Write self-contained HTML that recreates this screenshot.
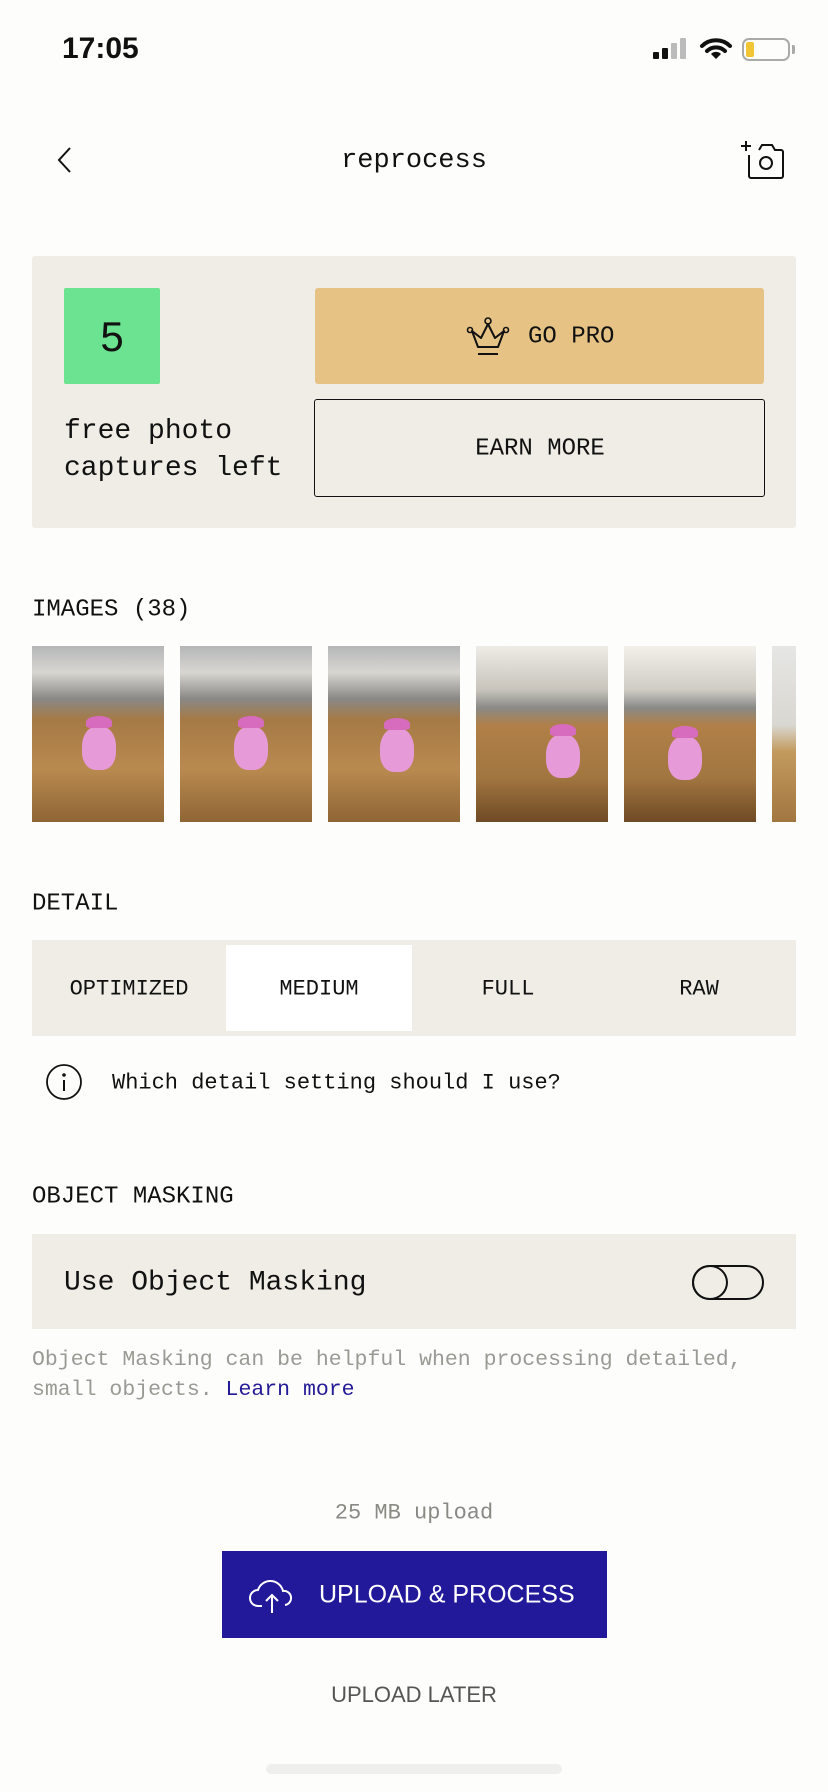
<!DOCTYPE html>
<html><head><meta charset="utf-8"><style>
*{margin:0;padding:0;box-sizing:border-box}
body{width:828px;height:1792px;background:#fdfdfb;position:relative;overflow:hidden;font-family:"Liberation Mono",monospace;color:#111}
.a{position:absolute}
.mono{font-family:"Liberation Mono",monospace}
.sans{font-family:"Liberation Sans",sans-serif}
.c{transform:translate(-50%,-50%);white-space:nowrap}
.l{transform:translateY(-50%);white-space:nowrap}
.thumb{position:absolute;top:646px;width:132px;height:176px;overflow:hidden;background:linear-gradient(180deg,#b5b6b8 0%,#d8d6d0 15%,#8a8886 30%,#a67a45 42%,#b98a50 70%,#8f6535 100%)}
.thumb .fig{position:absolute;width:34px;height:44px;background:#e79ad8;border-radius:45% 45% 40% 40%}
.thumb .hat{position:absolute;width:26px;height:12px;background:#d76bbd;border-radius:50% 50% 20% 20%}
</style></head><body>
<div class="a sans l" style="left:62px;top:49px;font-size:30px;font-weight:bold">17:05</div>
<div class="a" style="left:653px;top:52px;width:6px;height:7px;background:#111;border-radius:1px"></div>
<div class="a" style="left:662px;top:48px;width:6px;height:11px;background:#111;border-radius:1px"></div>
<div class="a" style="left:671px;top:43px;width:6px;height:16px;background:#bbb;border-radius:1px"></div>
<div class="a" style="left:680px;top:38px;width:6px;height:21px;background:#bbb;border-radius:1px"></div>
<svg class="a" style="left:700px;top:37px" width="32" height="24" viewBox="0 0 32 24"><path d="M2 9a20 20 0 0 1 28 0" stroke="#111" stroke-width="4" fill="none" stroke-linecap="round"/><path d="M7 14a13 13 0 0 1 18 0" stroke="#111" stroke-width="4" fill="none" stroke-linecap="round"/><path d="M16 22l-5-5a7 7 0 0 1 10 0z" fill="#111"/></svg>
<div class="a" style="left:742px;top:38px;width:48px;height:23px;border:2px solid #aaa;border-radius:7px"></div>
<div class="a" style="left:746px;top:42px;width:8px;height:15px;background:#f2c534;border-radius:2px"></div>
<div class="a" style="left:792px;top:45px;width:3px;height:9px;background:#aaa;border-radius:0 2px 2px 0"></div>
<svg class="a" style="left:56px;top:146px" width="18" height="28"><path d="M14 2L3 14l11 12" stroke="#111" stroke-width="2" fill="none"/></svg>
<div class="a mono c" style="left:414px;top:161px;font-size:27px">reprocess</div>
<svg class="a" style="left:740px;top:138px" width="46" height="42" viewBox="0 0 46 42"><path d="M1 8h10M6 3v10" stroke="#111" stroke-width="2"/><path d="M9 17v21a2 2 0 0 0 2 2h30a2 2 0 0 0 2-2V14a2 2 0 0 0-2-2h-6l-3-5h-10l-3 5" stroke="#111" stroke-width="2" fill="none"/><circle cx="26" cy="25" r="6" stroke="#111" stroke-width="2" fill="none"/></svg>
<div class="a" style="left:32px;top:256px;width:764px;height:272px;background:#efede6;border-radius:3px"></div>
<div class="a" style="left:64px;top:288px;width:96px;height:96px;background:#6ce391;border-radius:2px"></div>
<div class="a sans c" style="left:112px;top:337px;font-size:42px">5</div>
<div class="a" style="left:315px;top:288px;width:449px;height:96px;background:#e6c384;border-radius:3px"></div>
<svg class="a" style="left:466px;top:315px" width="44" height="44" viewBox="0 0 44 44"><path d="M6 16l6 16h20l6-16-9 7-7-14-7 14z" stroke="#111" stroke-width="2" fill="none" stroke-linejoin="round"/><circle cx="22" cy="6" r="3" stroke="#111" stroke-width="1.6" fill="none"/><circle cx="4" cy="15" r="2.5" stroke="#111" stroke-width="1.6" fill="none"/><circle cx="40" cy="15" r="2.5" stroke="#111" stroke-width="1.6" fill="none"/><path d="M12 39h20" stroke="#111" stroke-width="2"/></svg>
<div class="a mono l" style="left:528px;top:337px;font-size:24px">GO PRO</div>
<div class="a" style="left:314px;top:399px;width:451px;height:98px;border:1.5px solid #111;border-radius:3px"></div>
<div class="a mono c" style="left:540px;top:449px;font-size:24px">EARN MORE</div>
<div class="a mono" style="left:64px;top:413px;font-size:28px;line-height:37px">free photo<br>captures left</div>
<div class="a mono l" style="left:32px;top:610px;font-size:24px">IMAGES (38)</div>
<div class="thumb" style="left:32px"><div class="fig" style="left:50px;top:80px"></div><div class="hat" style="left:54px;top:70px"></div></div>
<div class="thumb" style="left:180px"><div class="fig" style="left:54px;top:80px"></div><div class="hat" style="left:58px;top:70px"></div></div>
<div class="thumb" style="left:328px"><div class="fig" style="left:52px;top:82px"></div><div class="hat" style="left:56px;top:72px"></div></div>
<div class="thumb" style="left:476px;background:linear-gradient(180deg,#eeece6 0%,#c8c4bc 25%,#8a8a88 35%,#b08048 45%,#a27640 75%,#6e4a25 100%)"><div class="fig" style="left:70px;top:88px"></div><div class="hat" style="left:74px;top:78px"></div></div>
<div class="thumb" style="left:624px;background:linear-gradient(180deg,#f2f0ea 0%,#d0ccc4 25%,#8a8a88 35%,#b08048 45%,#a27640 75%,#6e4a25 100%)"><div class="fig" style="left:44px;top:90px"></div><div class="hat" style="left:48px;top:80px"></div></div>
<div class="thumb" style="left:772px;width:24px;background:linear-gradient(180deg,#e6e6e4 0%,#d9d7d1 45%,#c29a5e 60%,#a27640 100%)"></div>
<div class="a mono l" style="left:32px;top:904px;font-size:24px">DETAIL</div>
<div class="a" style="left:32px;top:940px;width:764px;height:96px;background:#efede6"></div>
<div class="a" style="left:226px;top:945px;width:186px;height:86px;background:#fff"></div>
<div class="a mono c" style="left:129px;top:989px;font-size:22px">OPTIMIZED</div>
<div class="a mono c" style="left:319px;top:989px;font-size:22px">MEDIUM</div>
<div class="a mono c" style="left:508px;top:989px;font-size:22px">FULL</div>
<div class="a mono c" style="left:699px;top:989px;font-size:22px">RAW</div>
<svg class="a" style="left:45px;top:1063px" width="38" height="38"><circle cx="19" cy="19" r="17" stroke="#111" stroke-width="1.8" fill="none"/><circle cx="19" cy="12" r="1.8" fill="#111"/><path d="M19 17v11" stroke="#111" stroke-width="2"/></svg>
<div class="a mono l" style="left:112px;top:1083px;font-size:22px">Which detail setting should I use?</div>
<div class="a mono l" style="left:32px;top:1197px;font-size:24px">OBJECT MASKING</div>
<div class="a" style="left:32px;top:1234px;width:764px;height:95px;background:#efede6"></div>
<div class="a mono l" style="left:64px;top:1283px;font-size:28px">Use Object Masking</div>
<div class="a" style="left:692px;top:1265px;width:72px;height:35px;border:2px solid #111;border-radius:18px"></div>
<div class="a" style="left:692px;top:1265px;width:36px;height:35px;border:2px solid #111;border-radius:50%"></div>
<div class="a mono" style="left:32px;top:1345px;font-size:21.5px;line-height:30px;color:#9a9a94">Object Masking can be helpful when processing detailed,<br>small objects. <span style="color:#231a96">Learn more</span></div>
<div class="a mono c" style="left:414px;top:1513px;font-size:22px;color:#8a8a84">25 MB upload</div>
<div class="a" style="left:222px;top:1551px;width:385px;height:87px;background:#22199a"></div>
<svg class="a" style="left:248px;top:1578px" width="46" height="36" viewBox="0 0 46 36"><path d="M14 28H10a8 8 0 0 1 0-16 13 13 0 0 1 25 1 7 7 0 0 1 2 14" stroke="#fff" stroke-width="2" fill="none"/><path d="M24 35V17M18 23l6-6 6 6" stroke="#fff" stroke-width="2" fill="none"/></svg>
<div class="a sans l" style="left:319px;top:1595px;font-size:25px;color:#fff">UPLOAD &amp; PROCESS</div>
<div class="a sans c" style="left:414px;top:1695px;font-size:22px;color:#555">UPLOAD LATER</div>
<div class="a" style="left:266px;top:1764px;width:296px;height:10px;background:#efefed;border-radius:5px"></div>
</body></html>
